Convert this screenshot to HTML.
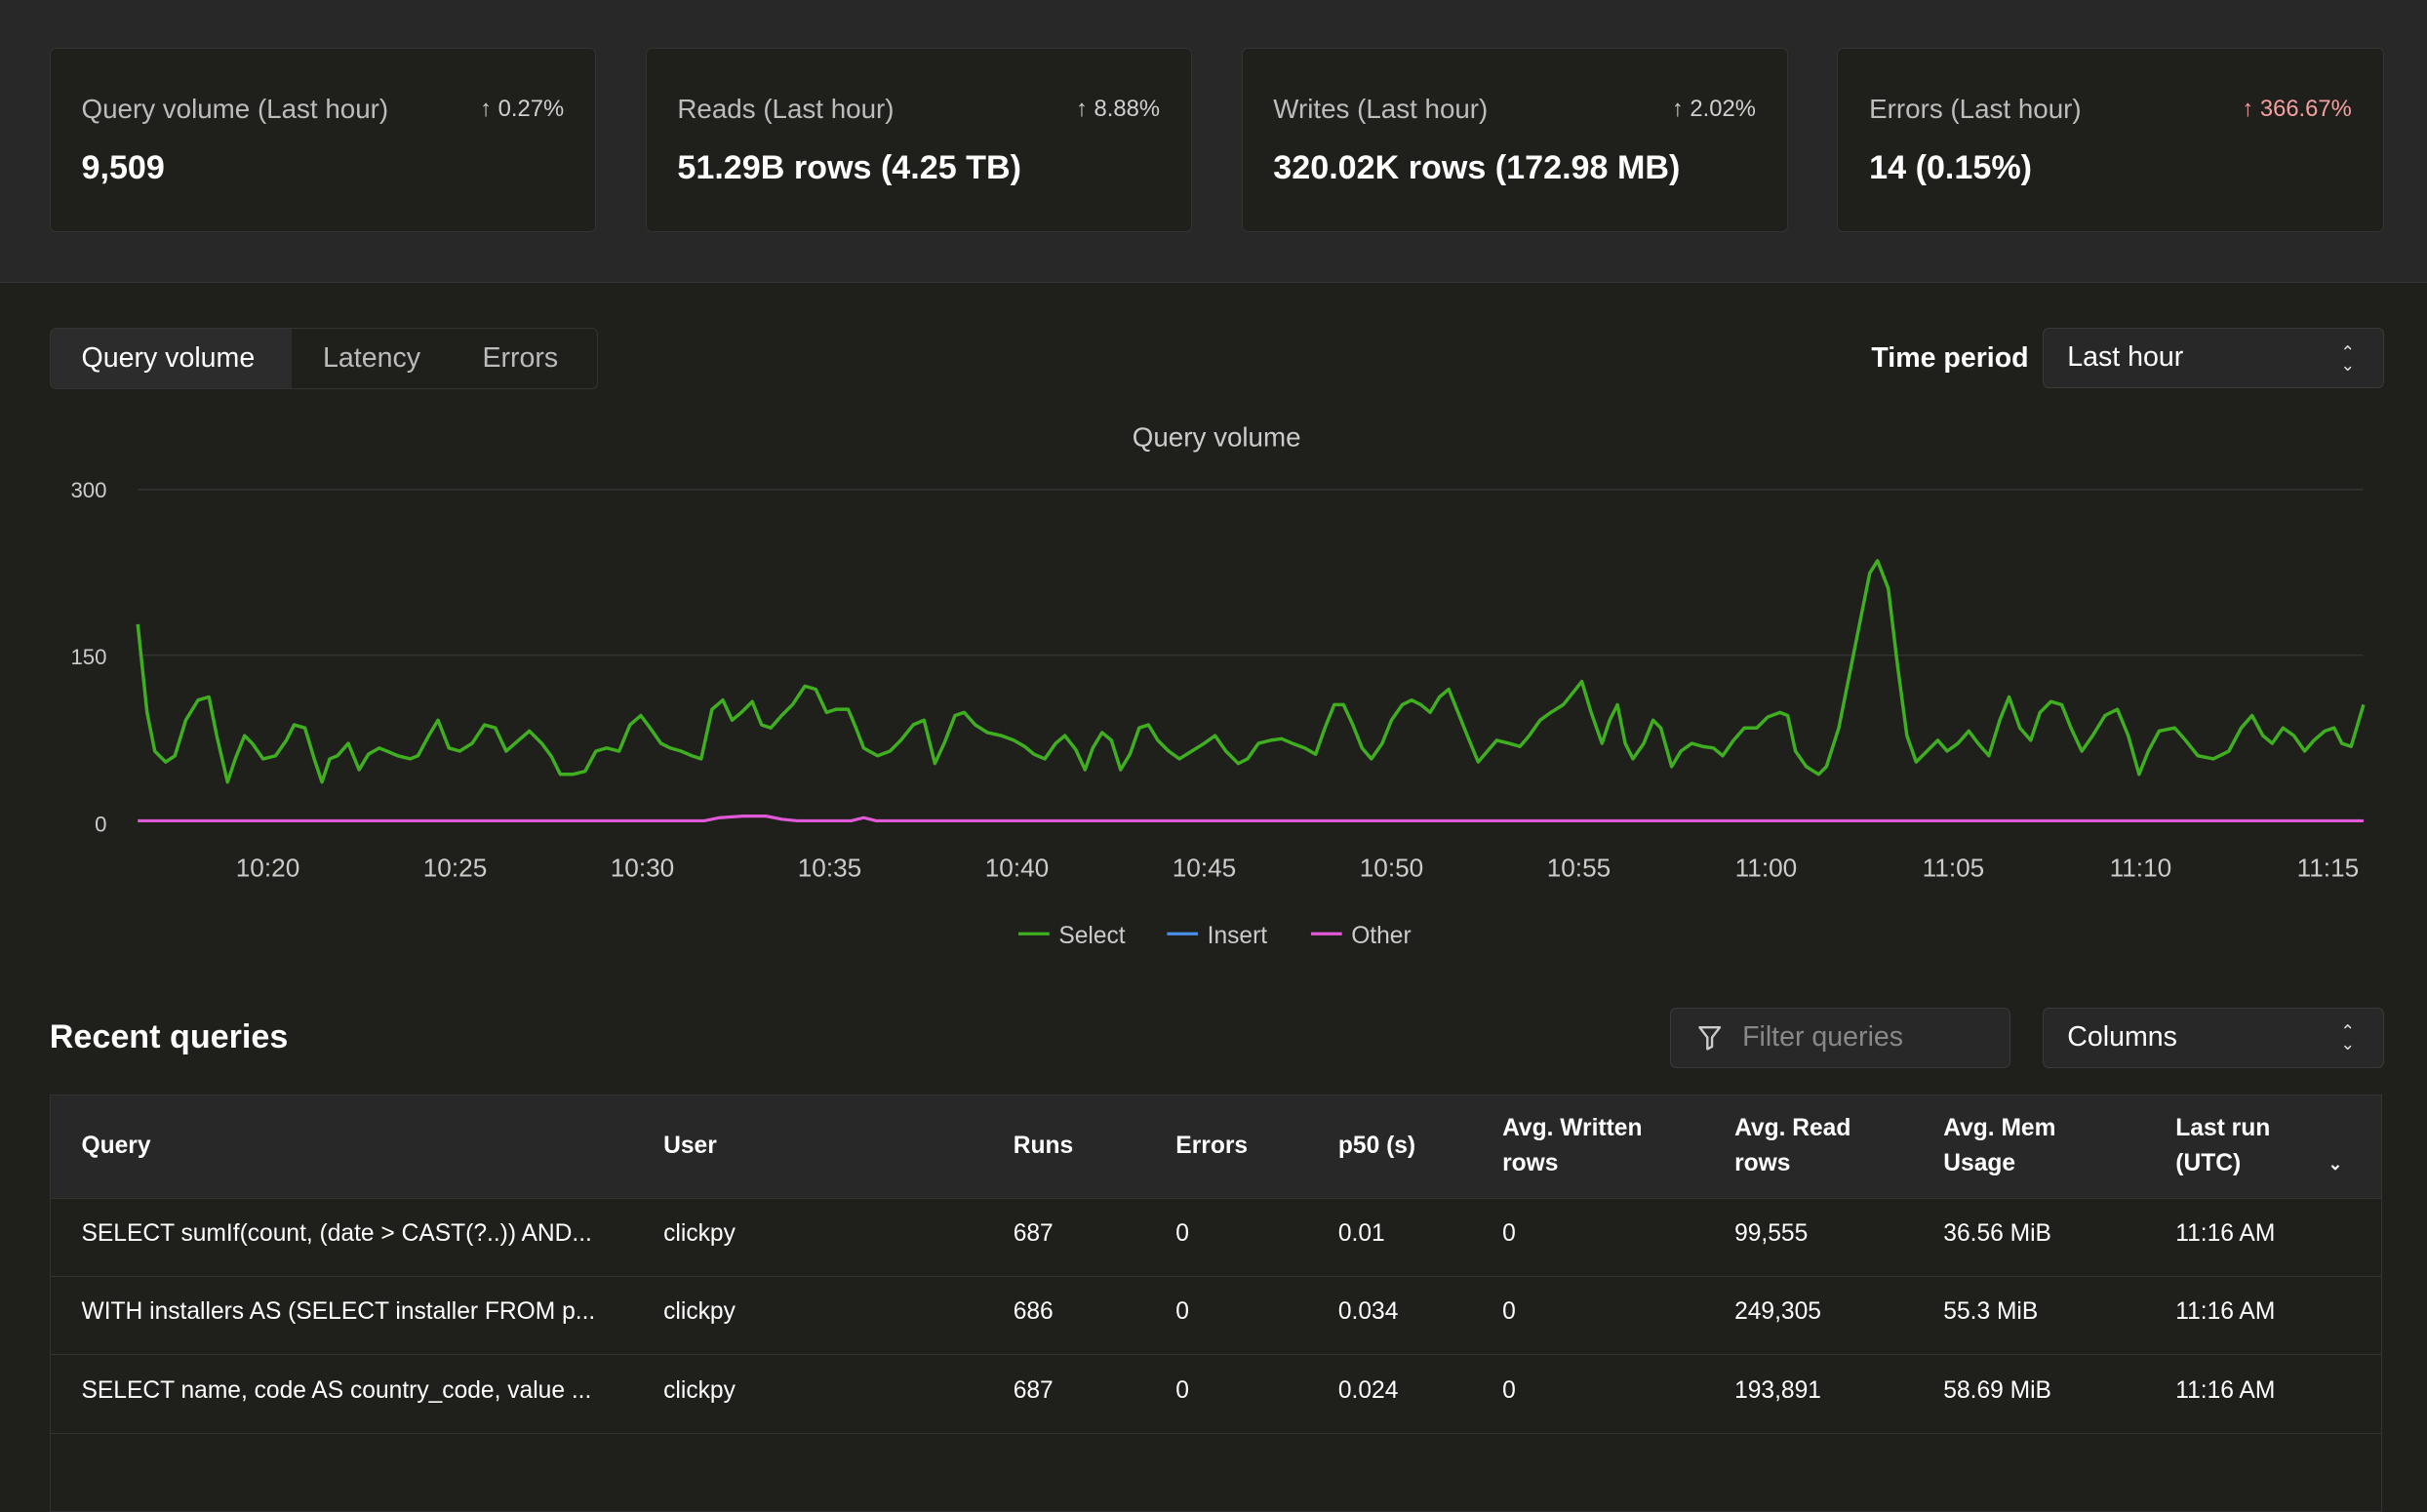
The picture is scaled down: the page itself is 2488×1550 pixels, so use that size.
<!DOCTYPE html>
<html><head><meta charset="utf-8">
<style>
html,body{margin:0;padding:0;background:#1f1f1c;}
body{width:1568px;height:937px;zoom:1.58673;overflow:hidden;font-family:"Liberation Sans",sans-serif;color:#fff;position:relative;}
.top{position:absolute;left:0;top:0;width:1568px;height:182px;background:#282828;border-bottom:1px solid #333;}
.card{position:absolute;top:31px;width:353px;height:119px;background:#1f1f1c;border:1px solid #333;border-radius:4px;box-sizing:border-box;}
.card .l{position:absolute;left:20px;top:29px;font-size:17.5px;color:#bdbdbd;}
.card .p{position:absolute;right:20px;top:30px;font-size:15px;color:#d0d0d0;}
.card .v{position:absolute;left:20px;top:65px;font-size:21.5px;font-weight:bold;}
.tabs{position:absolute;left:32px;top:212px;width:353px;height:38px;border:1px solid #333;border-radius:4px;display:flex;font-size:18px;color:#bbb;overflow:hidden;}
.tabs div{line-height:38px;padding:0 20px;}
.tabs .a{background:#2c2c2c;color:#fff;width:116px;}
.sel{position:absolute;height:39px;border:1px solid #3a3a3a;background:#282828;border-radius:4px;box-sizing:border-box;font-size:18px;line-height:37px;padding-left:15px;}
.chev{position:absolute;right:18px;top:0;font-size:11px;line-height:8px;color:#ddd;padding-top:11px;text-align:center}
table{position:absolute;left:32px;top:707px;width:1507px;border-collapse:collapse;font-size:15.5px;border:1px solid #333;}
th{background:#282828;text-align:left;font-weight:bold;font-size:15.5px;height:66px;padding:0 0 0 20px;line-height:23px;}
td{height:46px;padding:0 0 4px 20px;border-top:1px solid #333;}
</style></head><body>
<div class="top">
<div class="card" style="left:32px"><div class="l">Query volume (Last hour)</div><div class="p">↑ 0.27%</div><div class="v">9,509</div></div>
<div class="card" style="left:417px"><div class="l">Reads (Last hour)</div><div class="p">↑ 8.88%</div><div class="v">51.29B rows (4.25 TB)</div></div>
<div class="card" style="left:802px"><div class="l">Writes (Last hour)</div><div class="p">↑ 2.02%</div><div class="v">320.02K rows (172.98 MB)</div></div>
<div class="card" style="left:1187px"><div class="l">Errors (Last hour)</div><div class="p" style="color:#f4a0a0">↑ 366.67%</div><div class="v">14 (0.15%)</div></div>
</div>
<div class="tabs"><div class="a">Query volume</div><div>Latency</div><div>Errors</div></div>
<div style="position:absolute;left:1209px;top:221px;font-size:18px;font-weight:bold">Time period</div>
<div class="sel" style="left:1320px;top:212px;width:220px">Last hour<div class="chev">⌃<br>⌄</div></div>
<svg style="position:absolute;left:0;top:260px" width="1568" height="370" viewBox="0 260 1568 370">
<text x="786" y="288" fill="#ccc" font-size="17.5" text-anchor="middle" font-family="Liberation Sans">Query volume</text>
<g fill="#ccc" font-size="14" font-family="Liberation Sans" text-anchor="end"><text x="69" y="321">300</text><text x="69" y="429">150</text><text x="69" y="537">0</text></g>
<g stroke="#333" stroke-width="1"><line x1="89" y1="316" x2="1527" y2="316"/><line x1="89" y1="423" x2="1527" y2="423"/></g>
<g fill="#ccc" font-size="16.5" font-family="Liberation Sans" text-anchor="middle">
<text x="173" y="566">10:20</text><text x="294" y="566">10:25</text><text x="415" y="566">10:30</text><text x="536" y="566">10:35</text><text x="657" y="566">10:40</text><text x="778" y="566">10:45</text><text x="899" y="566">10:50</text><text x="1020" y="566">10:55</text><text x="1141" y="566">11:00</text><text x="1262" y="566">11:05</text><text x="1383" y="566">11:10</text><text x="1504" y="566">11:15</text></g>
<polyline fill="none" stroke="#3fae1f" stroke-width="2.2" stroke-linejoin="round" points="89,403 95,460 100,485 107,492 113,488 120,465 128,452 135,450 140,475 147,505 152,490 158,475 163,480 170,490 178,488 185,478 190,468 197,470 203,490 208,505 213,490 218,488 225,480 232,497 238,487 245,483 250,485 257,488 265,490 270,488 277,475 283,465 290,483 297,485 305,480 313,468 320,470 327,485 335,478 342,472 350,480 356,488 362,500 370,500 378,498 385,485 392,483 400,485 407,468 414,462 420,470 427,480 433,483 440,485 447,488 453,490 460,458 467,452 473,465 479,460 486,453 492,468 498,470 505,462 512,455 520,443 527,445 534,460 540,458 548,458 553,470 558,483 567,488 575,485 582,478 590,468 597,465 604,493 610,480 617,462 623,460 630,468 638,473 647,475 655,478 662,482 668,487 675,490 682,480 688,475 695,484 701,497 706,483 712,473 718,478 724,497 730,487 736,470 742,468 748,478 755,485 762,490 770,485 778,480 785,475 792,485 800,493 806,490 813,480 821,478 828,477 835,480 843,483 850,487 856,470 862,455 868,455 874,468 880,483 886,490 893,480 899,465 906,455 912,452 918,455 924,460 930,450 936,445 942,460 948,475 955,492 961,485 967,478 975,480 982,482 988,475 995,465 1002,460 1010,455 1018,445 1022,440 1028,460 1035,480 1040,465 1045,455 1050,480 1055,490 1062,480 1068,465 1073,470 1080,495 1086,485 1093,480 1100,482 1107,483 1113,488 1120,478 1127,470 1135,470 1142,463 1150,460 1155,462 1160,485 1167,495 1175,500 1180,495 1188,470 1195,435 1202,400 1208,370 1213,362 1220,380 1226,430 1232,475 1238,492 1245,485 1252,478 1258,485 1265,480 1272,472 1278,480 1285,488 1292,465 1298,450 1305,470 1312,478 1318,460 1325,453 1332,455 1338,470 1345,485 1352,475 1360,462 1368,458 1375,475 1382,500 1388,485 1395,472 1405,470 1412,478 1420,488 1430,490 1440,485 1448,470 1455,462 1462,475 1468,480 1475,470 1482,475 1489,485 1495,478 1502,472 1508,470 1513,480 1519,482 1527,455"/>
<polyline fill="none" stroke="#e05ad8" stroke-width="2" points="89,530 455,530 465,528 480,527 495,527 505,529 515,530 550,530 558,528 566,530 1527,530"/>
<g font-size="15.5" fill="#ccc" font-family="Liberation Sans">
<line x1="658" y1="603" x2="678" y2="603" stroke="#3fae1f" stroke-width="2"/><text x="684" y="609">Select</text>
<line x1="754" y1="603" x2="774" y2="603" stroke="#4a8fe8" stroke-width="2"/><text x="780" y="609">Insert</text>
<line x1="847" y1="603" x2="867" y2="603" stroke="#e05ad8" stroke-width="2"/><text x="873" y="609">Other</text></g>
</svg>
<div style="position:absolute;left:32px;top:658px;font-size:21.5px;font-weight:bold">Recent queries</div>
<div class="sel" style="left:1079px;top:651px;width:220px;color:#888;padding-left:46px">Filter queries
<svg style="position:absolute;left:17px;top:10px" width="16" height="18" viewBox="0 0 16 18"><path d="M1.5 2h13l-5 6.5v6l-3 1.5v-7.5z" fill="none" stroke="#ccc" stroke-width="1.5" stroke-linejoin="round"/></svg></div>
<div class="sel" style="left:1320px;top:651px;width:220px">Columns<div class="chev">⌃<br>⌄</div></div>
<table>
<tr><th style="width:356px">Query</th><th style="width:206px">User</th><th style="width:85px">Runs</th><th style="width:85px">Errors</th><th style="width:86px">p50 (s)</th><th style="width:130px">Avg. Written<br>rows</th><th style="width:115px">Avg. Read<br>rows</th><th style="width:130px">Avg. Mem<br>Usage</th><th>Last run<br>(UTC)<span style="float:right;margin-right:25px;font-size:11px">⌄</span></th></tr>
<tr><td>SELECT sumIf(count, (date &gt; CAST(?..)) AND...</td><td>clickpy</td><td>687</td><td>0</td><td>0.01</td><td>0</td><td>99,555</td><td>36.56 MiB</td><td>11:16 AM</td></tr>
<tr><td>WITH installers AS (SELECT installer FROM p...</td><td>clickpy</td><td>686</td><td>0</td><td>0.034</td><td>0</td><td>249,305</td><td>55.3 MiB</td><td>11:16 AM</td></tr>
<tr><td>SELECT name, code AS country_code, value ...</td><td>clickpy</td><td>687</td><td>0</td><td>0.024</td><td>0</td><td>193,891</td><td>58.69 MiB</td><td>11:16 AM</td></tr>
<tr><td>&nbsp;</td><td></td><td></td><td></td><td></td><td></td><td></td><td></td><td></td></tr>
</table>
</body></html>
